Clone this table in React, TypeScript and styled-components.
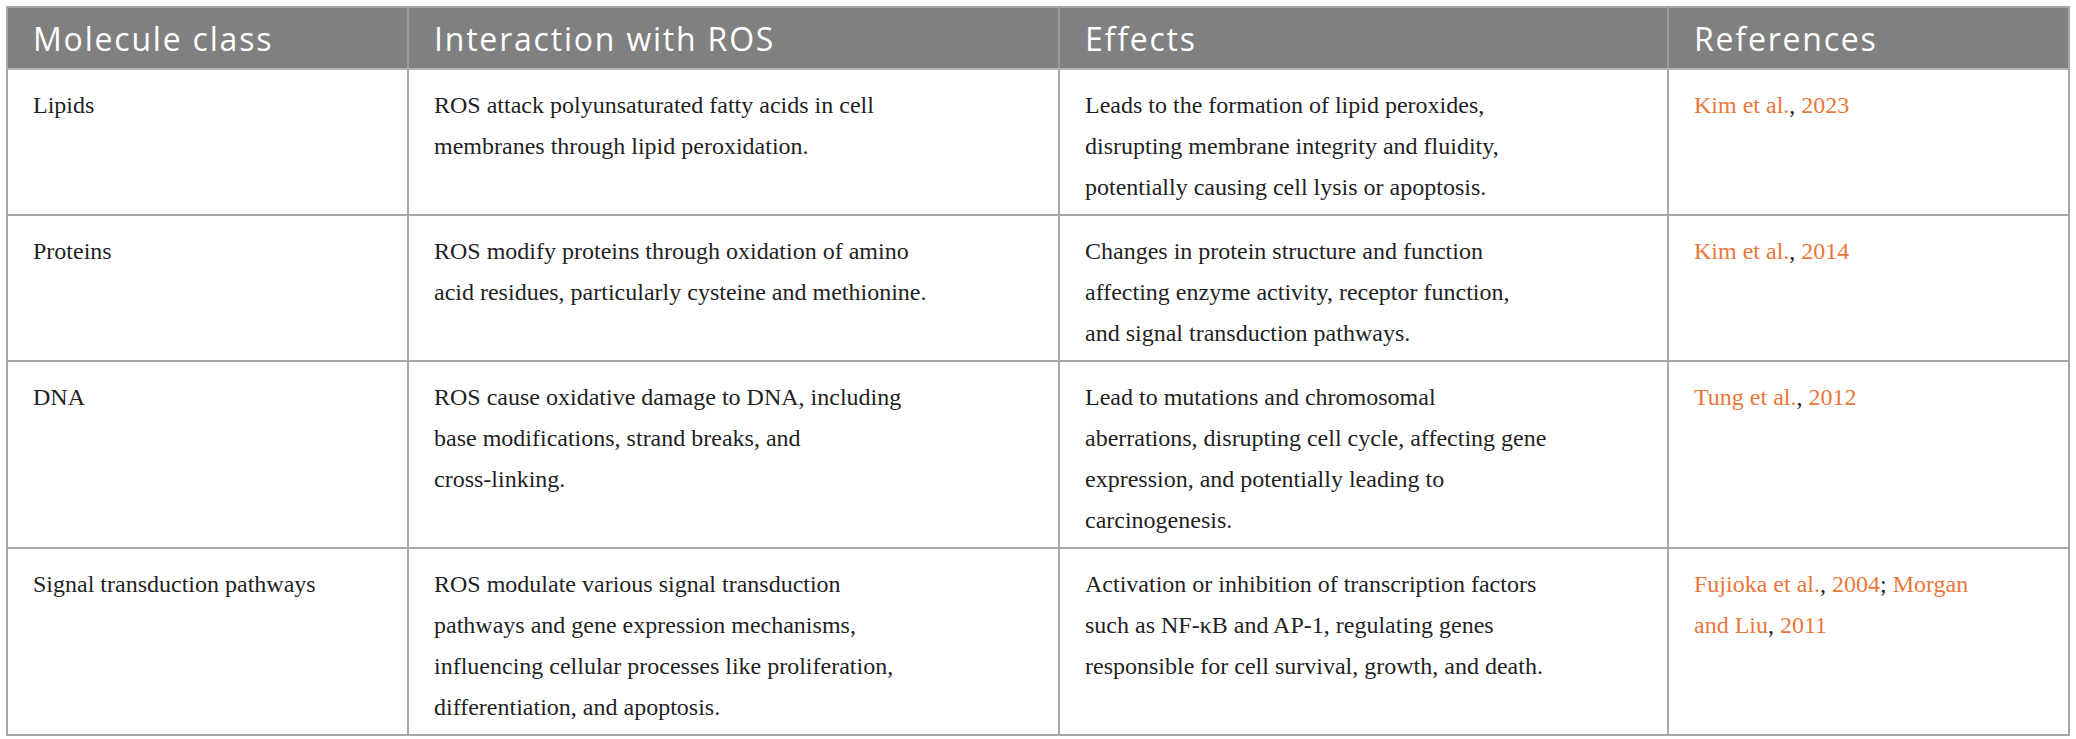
import React from "react";
import styled, { createGlobalStyle } from "styled-components";

const Global = createGlobalStyle`
  html, body { margin: 0; padding: 0; background: #ffffff; }
  body { font-family: "Liberation Serif", "Times New Roman", serif; }
`;

const Page = styled.div`
  padding: 6px 7px 6px 6px;
`;

const Table = styled.table`
  width: 2063px;
  border-collapse: collapse;
  table-layout: fixed;
  border: 2px solid #a7a7a7;
`;

const HeadCell = styled.th`
  background: #808080;
  color: #ffffff;
  font-family: "Open Sans", "Noto Sans", sans-serif;
  font-weight: 400;
  font-size: 32px;
  letter-spacing: 1.8px;
  text-align: left;
  height: 60px;
  padding: 0 25px;
  border-left: 2px solid #9a9a9a;
  border-bottom: 2px solid #b3b3b3;
  white-space: nowrap;
  &:first-child { border-left: none; }
`;

const Cell = styled.td`
  vertical-align: top;
  font-size: 24px;
  line-height: 41px;
  color: #1f1f1f;
  padding: 15px 25px 6px 25px;
  border: 2px solid #a7a7a7;
  white-space: nowrap;
`;

const Ref = styled.a`
  color: #ea773a;
  text-decoration: none;
`;

type Row = {
  cls: string;
  interaction: string[];
  effects: string[];
  refs: React.ReactNode;
};

const rows: Row[] = [
  {
    cls: "Lipids",
    interaction: [
      "ROS attack polyunsaturated fatty acids in cell",
      "membranes through lipid peroxidation.",
    ],
    effects: [
      "Leads to the formation of lipid peroxides,",
      "disrupting membrane integrity and fluidity,",
      "potentially causing cell lysis or apoptosis.",
    ],
    refs: (
      <>
        <Ref>Kim et al.</Ref>, <Ref>2023</Ref>
      </>
    ),
  },
  {
    cls: "Proteins",
    interaction: [
      "ROS modify proteins through oxidation of amino",
      "acid residues, particularly cysteine and methionine.",
    ],
    effects: [
      "Changes in protein structure and function",
      "affecting enzyme activity, receptor function,",
      "and signal transduction pathways.",
    ],
    refs: (
      <>
        <Ref>Kim et al.</Ref>, <Ref>2014</Ref>
      </>
    ),
  },
  {
    cls: "DNA",
    interaction: [
      "ROS cause oxidative damage to DNA, including",
      "base modifications, strand breaks, and",
      "cross-linking.",
    ],
    effects: [
      "Lead to mutations and chromosomal",
      "aberrations, disrupting cell cycle, affecting gene",
      "expression, and potentially leading to",
      "carcinogenesis.",
    ],
    refs: (
      <>
        <Ref>Tung et al.</Ref>, <Ref>2012</Ref>
      </>
    ),
  },
  {
    cls: "Signal transduction pathways",
    interaction: [
      "ROS modulate various signal transduction",
      "pathways and gene expression mechanisms,",
      "influencing cellular processes like proliferation,",
      "differentiation, and apoptosis.",
    ],
    effects: [
      "Activation or inhibition of transcription factors",
      "such as NF-κB and AP-1, regulating genes",
      "responsible for cell survival, growth, and death.",
    ],
    refs: (
      <>
        <Ref>Fujioka et al.</Ref>, <Ref>2004</Ref>; <Ref>Morgan</Ref>
        <br />
        <Ref>and Liu</Ref>, <Ref>2011</Ref>
      </>
    ),
  },
];

const Lines: React.FC<{ lines: string[] }> = ({ lines }) => (
  <>
    {lines.map((l, i) => (
      <React.Fragment key={i}>
        {i > 0 && <br />}
        {l}
      </React.Fragment>
    ))}
  </>
);

export default function App() {
  return (
    <>
      <Global />
      <Page>
        <Table>
          <colgroup>
            <col style={{ width: 401 }} />
            <col style={{ width: 651 }} />
            <col style={{ width: 609 }} />
            <col style={{ width: 401 }} />
          </colgroup>
          <thead>
            <tr>
              <HeadCell>Molecule class</HeadCell>
              <HeadCell>Interaction with ROS</HeadCell>
              <HeadCell>Effects</HeadCell>
              <HeadCell>References</HeadCell>
            </tr>
          </thead>
          <tbody>
            {rows.map((r) => (
              <tr key={r.cls}>
                <Cell>{r.cls}</Cell>
                <Cell>
                  <Lines lines={r.interaction} />
                </Cell>
                <Cell>
                  <Lines lines={r.effects} />
                </Cell>
                <Cell>{r.refs}</Cell>
              </tr>
            ))}
          </tbody>
        </Table>
      </Page>
    </>
  );
}
